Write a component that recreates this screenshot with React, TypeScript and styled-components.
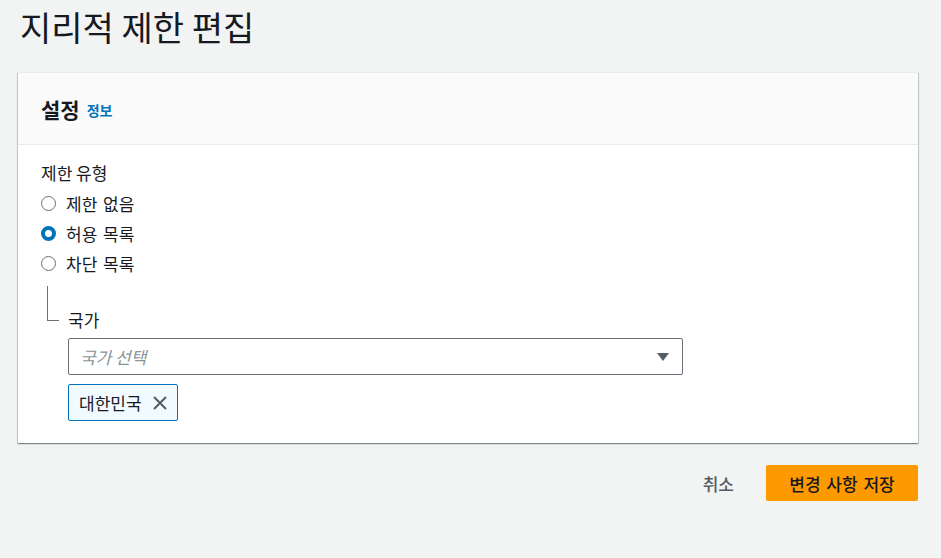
import styled, { createGlobalStyle } from "styled-components";

const GlobalStyle = createGlobalStyle`
  body {
    margin: 0;
    background: #f2f3f3;
    font-family: "Noto Sans CJK KR", "Noto Sans", Arial, sans-serif;
    color: #16191f;
  }
`;

const RADIO_OPTIONS = [
  { label: "제한 없음", checked: false },
  { label: "허용 목록", checked: true },
  { label: "차단 목록", checked: false },
];

const Radio = ({ label, checked }: { label: string; checked: boolean }) => (
  <RadioRow>
    <RadioDot $checked={checked} />
    <RadioLabel>{label}</RadioLabel>
  </RadioRow>
);

const App = () => {
  return (
    <Page>
      <GlobalStyle />
      <Title>지리적 제한 편집</Title>

      <Card>
        <CardHeader>
          <HeaderTitle>설정</HeaderTitle>
          <InfoLink>정보</InfoLink>
        </CardHeader>

        <CardBody>
          <FieldLabel>제한 유형</FieldLabel>
          <RadioGroup>
            {RADIO_OPTIONS.map((option) => (
              <Radio key={option.label} {...option} />
            ))}
          </RadioGroup>

          <Nested>
            <TreeLine />
            <NestedContent>
              <FieldLabel>국가</FieldLabel>
              <Select>
                <Placeholder>국가 선택</Placeholder>
                <svg width="12" height="8" viewBox="0 0 12 8">
                  <path d="M0 0 H12 L6 8 Z" fill="#545b64" />
                </svg>
              </Select>
              <Token>
                <TokenText>대한민국</TokenText>
                <svg width="16" height="16" viewBox="0 0 16 16">
                  <path
                    d="M2 2 L14 14 M14 2 L2 14"
                    stroke="#545b64"
                    strokeWidth="2"
                    fill="none"
                  />
                </svg>
              </Token>
            </NestedContent>
          </Nested>
        </CardBody>
      </Card>

      <Actions>
        <CancelButton>취소</CancelButton>
        <PrimaryButton>변경 사항 저장</PrimaryButton>
      </Actions>
    </Page>
  );
};

export default App;

const Page = styled.div`
  padding: 6px 23px 40px 18px;
`;

const Title = styled.h1`
  margin: 0 0 0 2px;
  font-size: 34px;
  font-weight: 400;
  line-height: 42px;
  color: #16191f;
`;

const Card = styled.div`
  margin-top: 24px;
  background: #ffffff;
  border-top: 1px solid #eaeded;
  box-shadow: 0 1px 1px 0 rgba(0, 28, 36, 0.3),
    1px 1px 1px 0 rgba(0, 28, 36, 0.15), -1px 1px 1px 0 rgba(0, 28, 36, 0.15);
`;

const CardHeader = styled.div`
  height: 72px;
  box-sizing: border-box;
  padding: 0 23px;
  display: flex;
  align-items: center;
  gap: 7px;
  background: #fafafa;
  border-bottom: 1px solid #eaeded;
`;

const HeaderTitle = styled.span`
  font-size: 21px;
  font-weight: 700;
  color: #16191f;
`;

const InfoLink = styled.span`
  font-size: 14px;
  font-weight: 700;
  color: #0073bb;
  margin-top: 3px;
`;

const CardBody = styled.div`
  padding: 17px 23px 22px;
`;

const FieldLabel = styled.div`
  font-size: 17px;
  line-height: 22px;
  color: #16191f;
`;

const RadioGroup = styled.div`
  display: flex;
  flex-direction: column;
  margin-top: 4px;
`;

const RadioRow = styled.div`
  height: 30px;
  display: flex;
  align-items: center;
  gap: 10px;
`;

const RadioDot = styled.span<{ $checked?: boolean }>`
  width: 15px;
  height: 15px;
  box-sizing: border-box;
  border-radius: 50%;
  background: #ffffff;
  border: ${(props) =>
    props.$checked ? "4.5px solid #0073bb" : "1.5px solid #687078"};
`;

const RadioLabel = styled.span`
  font-size: 17px;
  color: #16191f;
  word-spacing: 2px;
`;

const Nested = styled.div`
  display: flex;
  margin-top: 8px;
  padding-left: 6px;
`;

const TreeLine = styled.div`
  width: 11px;
  height: 34px;
  border-left: 1px solid #687078;
  border-bottom: 1px solid #687078;
`;

const NestedContent = styled.div`
  margin-left: 9px;
  padding-top: 23px;
  display: flex;
  flex-direction: column;
  align-items: flex-start;
`;

const Select = styled.div`
  margin-top: 7px;
  width: 615px;
  height: 37px;
  box-sizing: border-box;
  border: 1px solid #687078;
  border-radius: 2px;
  display: flex;
  align-items: center;
  justify-content: space-between;
  padding: 0 13px 0 11px;
  background: #ffffff;
`;

const Placeholder = styled.span`
  font-size: 17px;
  font-style: italic;
  color: #879596;
`;

const Token = styled.div`
  margin-top: 9px;
  height: 37px;
  box-sizing: border-box;
  padding: 0 9px 0 10px;
  display: flex;
  align-items: center;
  gap: 10px;
  background: #f1faff;
  border: 1px solid #0073bb;
  border-radius: 2px;
`;

const TokenText = styled.span`
  font-size: 17px;
  color: #16191f;
`;

const Actions = styled.div`
  margin-top: 22px;
  display: flex;
  justify-content: flex-end;
  align-items: center;
  gap: 32px;
`;

const CancelButton = styled.span`
  font-size: 17px;
  font-weight: 500;
  color: #545b64;
`;

const PrimaryButton = styled.div`
  width: 152px;
  height: 36px;
  display: flex;
  align-items: center;
  justify-content: center;
  background: #ff9900;
  border-radius: 2px;
  font-size: 17px;
  font-weight: 500;
  color: #16191f;
  word-spacing: 2px;
`;
